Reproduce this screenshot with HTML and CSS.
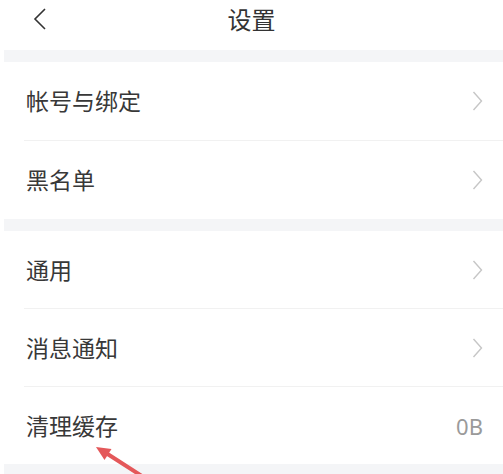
FILE: index.html
```html
<!DOCTYPE html>
<html lang="zh-CN">
<head>
<meta charset="utf-8">
<title>设置</title>
<link rel="stylesheet" href="styles.css">
</head>
<body>
<div class="page">
  <header class="topbar">
    <span class="back">
      <svg width="14" height="22" viewBox="0 0 14 22"><polyline points="12,1 2,11 12,21" fill="none" stroke="#333" stroke-width="1.6"/></svg>
    </span>
    <h1 class="title">设置</h1>
  </header>
  <div class="band"></div>
  <section class="group group-top">
    <div class="row"><span class="label">帐号与绑定</span><span class="chev"><svg width="11" height="20" viewBox="0 0 11 20"><polyline points="1.5,1 9.5,10 1.5,19" fill="none" stroke="#c6c6c6" stroke-width="1.4"/></svg></span></div>
    <div class="row"><span class="label">黑名单</span><span class="chev"><svg width="11" height="20" viewBox="0 0 11 20"><polyline points="1.5,1 9.5,10 1.5,19" fill="none" stroke="#c6c6c6" stroke-width="1.4"/></svg></span></div>
  </section>
  <div class="band"></div>
  <section class="group">
    <div class="row"><span class="label">通用</span><span class="chev"><svg width="11" height="20" viewBox="0 0 11 20"><polyline points="1.5,1 9.5,10 1.5,19" fill="none" stroke="#c6c6c6" stroke-width="1.4"/></svg></span></div>
    <div class="row"><span class="label">消息通知</span><span class="chev"><svg width="11" height="20" viewBox="0 0 11 20"><polyline points="1.5,1 9.5,10 1.5,19" fill="none" stroke="#c6c6c6" stroke-width="1.4"/></svg></span></div>
    <div class="row"><span class="label">清理缓存</span><span class="value">0B</span></div>
  </section>
  <div class="band band-last"></div>
  <svg class="pointer" width="503" height="474" viewBox="0 0 503 474">
    <line x1="106" y1="453" x2="148" y2="480" stroke="#e4585a" stroke-width="4" stroke-linecap="round"/>
    <polygon points="96,447 111.5,449 104.5,460" fill="#e4585a"/>
  </svg>
</div>
</body>
</html>
```
FILE: styles.css
```css
html, body {
  margin: 0;
  padding: 0;
  background: #fff;
}
body {
  font-family: "Noto Sans CJK SC", "Noto Sans", sans-serif;
  color: #333;
  overflow: hidden;
}
.page {
  position: relative;
  width: 503px;
  height: 474px;
  overflow: hidden;
}
.topbar {
  height: 50px;
  position: relative;
  display: flex;
  align-items: center;
  justify-content: center;
}
.back {
  position: absolute;
  left: 33px;
  top: 8px;
  display: flex;
}
.title {
  margin: 0 0 12px 0;
  font-size: 24px;
  font-weight: 400;
  line-height: 26px;
  color: #333;
}
.band {
  height: 12px;
  margin-left: 4px;
  background: #f4f5f7;
}
.band-last {
  height: 20px;
}
.group {
  padding-left: 24px;
}
.row {
  height: 77px;
  display: flex;
  align-items: center;
  justify-content: space-between;
  padding-right: 20px;
  border-bottom: 1px solid #f1f1f1;
}
.group-top .row {
  height: 78px;
}
.row:last-child {
  border-bottom: none;
}
.label {
  font-size: 23px;
  line-height: 28px;
  color: #383838;
  padding-left: 2px;
  margin-top: -2px;
}
.chev {
  display: flex;
}
.value {
  font-family: "Noto Sans", sans-serif;
  font-size: 22px;
  color: #9a9a9a;
}
.pointer {
  position: absolute;
  left: 0;
  top: 0;
  pointer-events: none;
}
```
